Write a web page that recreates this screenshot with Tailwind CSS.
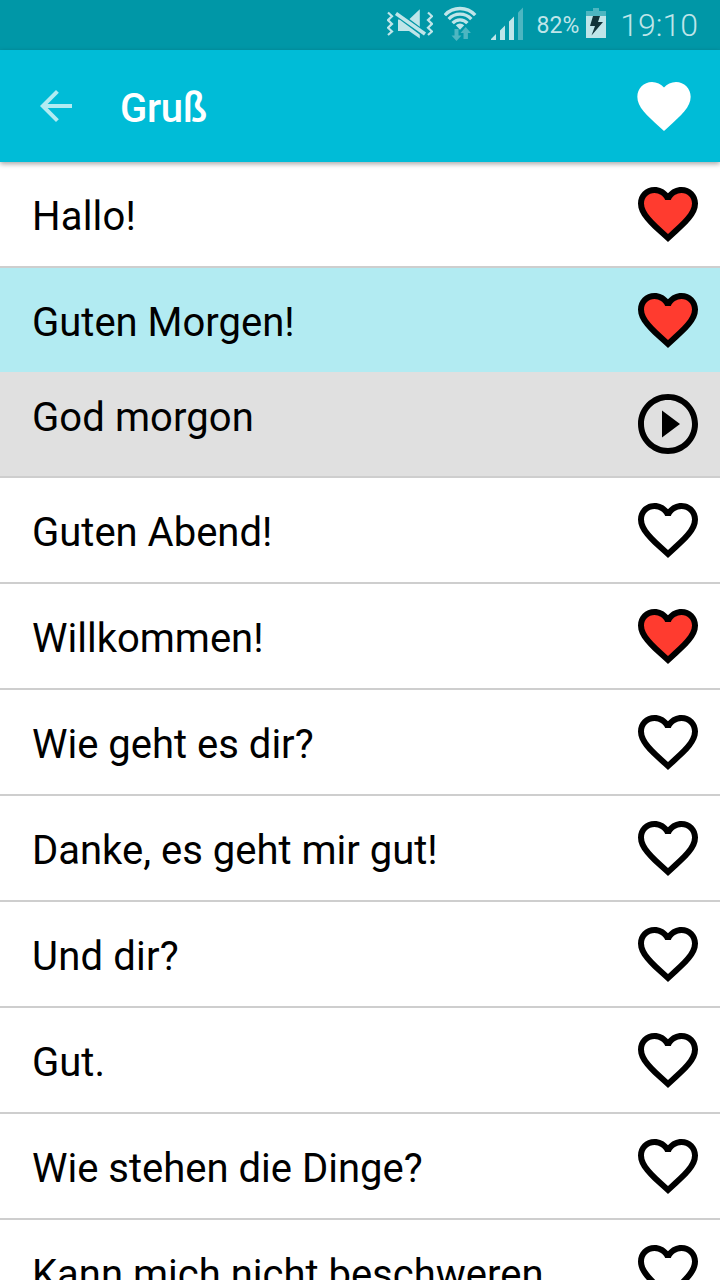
<!DOCTYPE html>
<html lang="de">
<head>
  <meta charset="UTF-8" />
  <meta name="viewport" content="width=device-width, initial-scale=1.0"/>
  <title>Gruß</title>
  <script src="https://cdn.jsdelivr.net/npm/@tailwindcss/browser@4"></script>
</head>
<body class="h-screen overflow-hidden flex flex-col bg-white text-black font-['Roboto',sans-serif]">

  <!-- Shared icons -->
  <svg class="hidden">
    <symbol id="heart" viewBox="0 0 24 24">
      <path d="M12 21.35l-1.45-1.32C5.4 15.36 2 12.28 2 8.5 2 5.42 4.42 3 7.5 3c1.74 0 3.41.81 4.5 2.09C13.09 3.81 14.76 3 16.5 3 19.58 3 22 5.42 22 8.5c0 3.78-3.4 6.86-8.55 11.54L12 21.35z"/>
    </symbol>
    <symbol id="heart-outline" viewBox="0 0 24 24">
      <path d="M16.5 3c-1.74 0-3.41.81-4.5 2.09C10.91 3.81 9.24 3 7.5 3 4.42 3 2 5.42 2 8.5c0 3.78 3.4 6.86 8.55 11.54L12 21.35l1.45-1.32C18.6 15.36 22 12.28 22 8.5 22 5.42 19.58 3 16.5 3zm-4.4 15.55l-.1.1-.1-.1C7.14 14.24 4 11.39 4 8.5 4 6.5 5.5 5 7.5 5c1.54 0 3.04.99 3.57 2.36h1.87C13.46 5.99 14.96 5 16.5 5c2 0 3.5 1.5 3.5 3.5 0 2.89-3.14 5.74-7.9 10.05z"/>
    </symbol>
    <symbol id="heart-red" viewBox="0 0 24 24">
      <path fill="#ff3b2f" d="M12 20L4 12L3 8.500L4 5.500L7.500 4L11 6.500H13L16.500 4L20 5.500L21 8.500L20 12z"/>
      <use href="#heart-outline"/>
    </symbol>
  </svg>

  <!-- Status bar -->
  <div class="h-[50px] shrink-0 bg-[#0097a7] text-[#bfe5e9] flex items-center justify-end pr-[22px]">
    <!-- Muted -->
    <svg class="w-[46px] h-[50px] mr-[11px]" viewBox="387 0 46 50" fill="none">
      <path fill="currentColor" d="M398 19.500h11l10.800-10.300v29.300l-10.800-7.500h-11z"/>
      <path stroke="#0097a7" stroke-width="6.400" d="M394 11.500l33 24.500"/>
      <path stroke="currentColor" stroke-width="3.600" d="M396 13.500l29 20.500"/>
      <path stroke="currentColor" stroke-width="2.200" d="M388 12.500l4 3.800-4 3.800 4 3.800-4 3.800 4 3.800-4 3.500M428 12.500l4 3.800-4 3.800 4 3.800-4 3.800 4 3.800-4 3.500"/>
    </svg>
    <!-- Wifi -->
    <svg class="w-[33px] h-[50px] mr-[14px]" viewBox="444 0 33 50" fill="none">
      <g stroke="currentColor" stroke-width="3.300">
        <path d="M444.800 15.200a20.600 20.600 0 0 1 30.400 0"/>
        <path d="M448.700 19.200a15.300 15.300 0 0 1 22.600 0"/>
        <path d="M452.600 23.200a10 10 0 0 1 14.800 0"/>
      </g>
      <path fill="currentColor" d="M460 29.800l-4.200-4.600a6 6 0 0 1 8.400 0z"/>
      <path fill="#4db6c1" d="M454.500 29h4v6.500h3l-5 5.500-5-5.500h3zM463.500 39v-6h-3l5.200-6 5.200 6h-3v6z"/>
    </svg>
    <!-- Signal -->
    <svg class="w-[32px] h-[50px] mr-[14px]" viewBox="491 0 32 50" fill="currentColor">
      <path d="M490 40l6-6v6zM500 30.500l5-5v14.500h-5zM509 21.500l5-5v23.500h-5z"/>
      <path fill="#4db6c1" d="M518 12.500l5-5v32.500h-5z"/>
    </svg>
    <span class="pt-[2px] text-[23px] leading-[48px] mr-[7px]">82%</span>
    <!-- Battery -->
    <svg class="w-[20px] h-[50px] mr-[14px]" viewBox="586 0 20 50">
      <path fill="#4db6c1" d="M593 8h6v3h7v5h-20v-5h7z"/>
      <path fill="currentColor" d="M586 16h20v22h-20z"/>
      <path fill="#12343a" d="M593 16h7l-2 6h5l-11.500 13.500 3.500-9.500h-5z"/>
    </svg>
    <span class="text-[32px] leading-[50px] font-light">19:10</span>
  </div>

  <!-- App bar -->
  <header class="relative h-[112px] shrink-0 bg-[#00bcd7] text-white flex items-center pl-8 pr-[24px] shadow-[0_2px_5px_rgba(0,0,0,0.35)]">
    <svg class="size-12 text-[#b2ebf2]" viewBox="0 0 24 24" fill="currentColor">
      <path d="M20 11H7.830l5.590-5.590L12 4l-8 8 8 8 1.410-1.410L7.830 13H20v-2z"/>
    </svg>
    <h1 class="ml-10 pt-1.5 text-[40px] leading-[48px] font-medium tracking-[-0.3px]">Gruß</h1>
    <svg class="size-[64px] ml-auto fill-white"><use href="#heart"/></svg>
  </header>

  <!-- Phrases -->
  <main>
    <div class="h-[106px] flex items-start justify-between pl-8 pr-4 pt-4 border-b-2 border-[#cecece]">
      <span class="pt-[15px] text-[40px] leading-[48px] tracking-[0.2px]">Hallo!</span>
      <svg class="size-18"><use href="#heart-red"/></svg>
    </div>
    <div class="h-[104px] flex items-start justify-between pl-8 pr-4 pt-4 bg-[#b2ebf2]">
      <span class="pt-[15px] text-[40px] leading-[48px]">Guten Morgen!</span>
      <svg class="size-18"><use href="#heart-red"/></svg>
    </div>
    <!-- Translation of the selected phrase -->
    <div class="h-[106px] flex items-start justify-between pl-8 pr-4 pt-4 bg-[#e0e0e0] border-b-2 border-[#cecece]">
      <span class="pt-[6px] text-[40px] leading-[48px] tracking-[0.1px]">God morgon</span>
      <svg class="size-18" viewBox="0 0 24 24">
        <path d="M10 16.500l6-4.500-6-4.500v9zM12 2C6.480 2 2 6.480 2 12s4.480 10 10 10 10-4.480 10-10S17.520 2 12 2zm0 18c-4.410 0-8-3.590-8-8s3.590-8 8-8 8 3.590 8 8-3.590 8-8 8z"/>
      </svg>
    </div>
    <div class="h-[106px] flex items-start justify-between pl-8 pr-4 pt-4 border-b-2 border-[#cecece]">
      <span class="pt-[15px] text-[40px] leading-[48px]">Guten Abend!</span>
      <svg class="size-18"><use href="#heart-outline"/></svg>
    </div>
    <div class="h-[106px] flex items-start justify-between pl-8 pr-4 pt-4 border-b-2 border-[#cecece]">
      <span class="pt-[15px] text-[40px] leading-[48px]">Willkommen!</span>
      <svg class="size-18"><use href="#heart-red"/></svg>
    </div>
    <div class="h-[106px] flex items-start justify-between pl-8 pr-4 pt-4 border-b-2 border-[#cecece]">
      <span class="pt-[15px] text-[40px] leading-[48px]">Wie geht es dir?</span>
      <svg class="size-18"><use href="#heart-outline"/></svg>
    </div>
    <div class="h-[106px] flex items-start justify-between pl-8 pr-4 pt-4 border-b-2 border-[#cecece]">
      <span class="pt-[15px] text-[40px] leading-[48px]">Danke, es geht mir gut!</span>
      <svg class="size-18"><use href="#heart-outline"/></svg>
    </div>
    <div class="h-[106px] flex items-start justify-between pl-8 pr-4 pt-4 border-b-2 border-[#cecece]">
      <span class="pt-[15px] text-[40px] leading-[48px] tracking-[0.2px]">Und dir?</span>
      <svg class="size-18"><use href="#heart-outline"/></svg>
    </div>
    <div class="h-[106px] flex items-start justify-between pl-8 pr-4 pt-4 border-b-2 border-[#cecece]">
      <span class="pt-[15px] text-[40px] leading-[48px]">Gut.</span>
      <svg class="size-18"><use href="#heart-outline"/></svg>
    </div>
    <div class="h-[106px] flex items-start justify-between pl-8 pr-4 pt-4 border-b-2 border-[#cecece]">
      <span class="pt-[15px] text-[40px] leading-[48px]">Wie stehen die Dinge?</span>
      <svg class="size-18"><use href="#heart-outline"/></svg>
    </div>
    <div class="h-[106px] flex items-start justify-between pl-8 pr-4 pt-4 border-b-2 border-[#cecece]">
      <span class="pt-[15px] text-[40px] leading-[48px]">Kann mich nicht beschweren</span>
      <svg class="size-18"><use href="#heart-outline"/></svg>
    </div>
  </main>

</body>
</html>
